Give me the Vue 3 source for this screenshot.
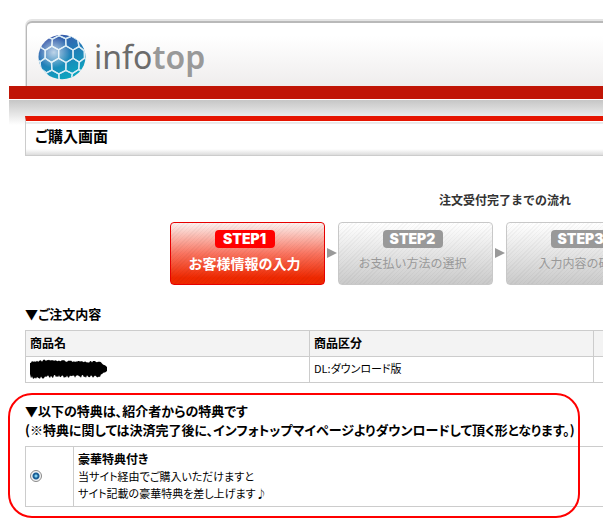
<template>
  <div class="page">
    <header class="header">
      <a class="logo" href="#" aria-label="infotop">
        <svg class="globe" viewBox="0 0 48 46" aria-hidden="true">
          <defs>
            <linearGradient id="sea" x1="0.15" y1="0" x2="0.6" y2="1">
              <stop offset="0" stop-color="#4350a6" />
              <stop offset="0.45" stop-color="#2577b6" />
              <stop offset="1" stop-color="#0aa8c0" />
            </linearGradient>
            <radialGradient id="shine" cx="0.33" cy="0.4" r="0.34">
              <stop offset="0" stop-color="#fff" stop-opacity="0.7" />
              <stop offset="1" stop-color="#fff" stop-opacity="0" />
            </radialGradient>
            <clipPath id="ball"><ellipse cx="24" cy="23" rx="23.5" ry="22.3" /></clipPath>
          </defs>
          <g clip-path="url(#ball)">
            <rect width="48" height="46" fill="url(#sea)" />
            <polygon
              v-for="(cell, i) in cells"
              :key="i"
              :points="cell"
              fill="none"
              stroke="#d9ecf5"
              stroke-width="1.3"
            />
            <rect width="48" height="46" fill="url(#shine)" />
          </g>
        </svg>
        <span class="name">info<b>top</b></span>
      </a>
    </header>
    <div class="bar"></div>

    <main class="main">
      <h1 class="title">ご購入画面</h1>

      <section class="flow">
        <h2 class="flow-title">注文受付完了までの流れ</h2>
        <ol class="steps">
          <li v-for="step in steps" :key="step.no" class="step" :class="{ active: step.active }">
            <span class="badge">{{ step.no }}</span>
            <span class="label">{{ step.label }}</span>
          </li>
        </ol>
      </section>

      <section class="order">
        <h2 class="heading">▼ご注文内容</h2>
        <table class="items">
          <colgroup>
            <col class="wide" />
            <col class="wide" />
            <col />
          </colgroup>
          <thead>
            <tr>
              <th>商品名</th>
              <th>商品区分</th>
              <th></th>
            </tr>
          </thead>
          <tbody>
            <tr>
              <td>
                <svg class="scribble" viewBox="0 0 78 22" aria-hidden="true">
                  <path :d="scribble" />
                </svg>
              </td>
              <td>DL:ダウンロード版</td>
              <td></td>
            </tr>
          </tbody>
        </table>
      </section>

      <section class="bonus">
        <h2 class="heading">
          ▼以下の特典は、紹介者からの特典です<br />
          <span class="note">(※特典に関しては決済完了後に、インフォトップマイページよりダウンロードして頂く形となります。)</span>
        </h2>
        <table class="items">
          <colgroup>
            <col class="narrow" />
            <col />
          </colgroup>
          <tbody>
            <tr>
              <td><input id="bonus1" v-model="picked" type="radio" name="bonus" value="1" /></td>
              <td>
                <label for="bonus1">
                  <strong>豪華特典付き</strong><br />
                  当サイト経由でご購入いただけますと<br />
                  サイト記載の豪華特典を差し上げます♪
                </label>
              </td>
            </tr>
          </tbody>
        </table>
        <div class="marker"></div>
      </section>
    </main>
  </div>
</template>

<script setup>
import { ref } from "vue";

const picked = ref("1");

const steps = [
  { no: "STEP1", label: "お客様情報の入力", active: true },
  { no: "STEP2", label: "お支払い方法の選択", active: false },
  { no: "STEP3", label: "入力内容の確認", active: false },
];

// 六角形のマス目を球面に投影する
const R = 28;
const project = (x, y) => {
  const d = Math.hypot(x, y) || 1;
  const r = R * Math.sin(Math.min(d / R, Math.PI / 2));
  return `${(24 + (x / d) * r).toFixed(1)},${(23 + (y / d) * r).toFixed(1)}`;
};
const cells = [];
for (let row = -3; row <= 3; row++) {
  for (let col = -3; col <= 3; col++) {
    const cx = 4 + col * 14.8 + (row % 2 ? 7.4 : 0);
    const cy = -3 + row * 12.8;
    const points = [];
    for (let k = 0; k < 6; k++) {
      const a = Math.PI / 6 + (k * Math.PI) / 3;
      points.push(project(cx + 8.54 * Math.cos(a), cy + 8.54 * Math.sin(a)));
    }
    cells.push(points.join(" "));
  }
}

// 商品名を隠す塗りつぶし（ふちはギザギザ）
const noise = (n) => Math.abs(Math.sin(n * 12.9898) * 43758.5453) % 1;
const top = [];
const bottom = [];
for (let x = 1; x <= 75; x++) {
  const end = x > 70 ? (x - 70) * 0.8 : 0;
  top.push(`${x} ${2 + noise(x) * 2 + (x < 14 ? 1 : 0) - Math.sin(x / 12) + end}`);
  bottom.unshift(`${x} ${17 + noise(x + 99) * 3 + (x < 14 ? 1 : 0) - end}`);
}
const scribble = `M0 5L${top.join("L")}L77 9L77 13L${bottom.join("L")}L0 16Z`;
</script>

<style>
body {
  margin: 0;
  background: #fff;
}
</style>

<style scoped>
.page {
  padding: 19px 0 14px 9px;
  overflow: hidden;
  color: #000;
  font-family: "Noto Sans CJK JP", sans-serif;
  font-size: 11px;
  font-feature-settings: "palt";
}

.header {
  height: 67px;
  margin-left: 16px;
  padding: 2px 0 0 1px;
  box-sizing: border-box;
  border-top-left-radius: 7px;
  background: #e4e4e4;
}

.logo {
  display: flex;
  align-items: center;
  gap: 8px;
  height: 65px;
  padding: 5px 0 0 11px;
  box-sizing: border-box;
  border: solid #b9b9b9;
  border-width: 2px 0 0 1px;
  border-top-left-radius: 6px;
  background: linear-gradient(#fff 20%, #efeded);
  color: #6b6b6b;
  text-decoration: none;
}

.globe {
  width: 48px;
  height: 46px;
}

.name {
  font-family: "Noto Sans", sans-serif;
  font-size: 32px;
  line-height: 44px;
}

.name b {
  color: #999;
  font-weight: 600;
}

.bar {
  height: 39px;
  margin-bottom: -9px;
  box-sizing: border-box;
  border-top: 13px solid #c01506;
  background: linear-gradient(#fff 1px, #c6c6c6 1px, #fff);
}

.main {
  margin-left: 16px;
}

.title {
  position: relative;
  height: 40px;
  margin: 0;
  padding-left: 9px;
  box-sizing: border-box;
  border-top: 5px solid #e51400;
  border-bottom: 1px solid #ccc;
  border-left: 1px solid #ccc;
  background: linear-gradient(#fff 1px, #e6e6e6 1px, #eee 3px, #fff 3px, #fff 28px, #dcdcdc);
  font-size: 15px;
  line-height: 30px;
}

.flow {
  width: 670px;
  margin: 34px 0 0 145px;
}

.flow-title {
  margin: 0;
  color: #333;
  font-size: 12px;
  line-height: 20px;
  text-align: center;
  font-feature-settings: normal;
}

.steps {
  display: flex;
  gap: 13px;
  margin: 12px 0 0;
  padding: 0;
  list-style: none;
}

.step {
  position: relative;
  display: flex;
  flex: 0 0 155px;
  flex-direction: column;
  align-items: center;
  height: 63px;
  padding: 7px 6px 0 0;
  box-sizing: border-box;
  border: 1px solid #c8c8c8;
  border-radius: 4px;
  background: repeating-linear-gradient(135deg, rgba(0, 0, 0, 0.03) 0 1px, transparent 1px 3px),
    linear-gradient(#fff, #cacaca);
  color: #999;
  font-size: 12px;
  font-feature-settings: normal;
}

.step + .step::before {
  content: "";
  position: absolute;
  top: 25px;
  left: -12px;
  border: solid transparent;
  border-width: 5px 0 5px 10px;
  border-left-color: #999;
}

.step.active {
  border-color: #e60000;
  background: repeating-linear-gradient(135deg, rgba(0, 0, 0, 0.03) 0 1px, transparent 1px 3px),
    linear-gradient(#fbf1ef, #f97460 50%, #ee2800 90%);
  color: #fff;
  font-size: 14px;
  font-weight: bold;
}

.badge {
  width: 60px;
  border-radius: 4px;
  background: #999;
  color: #fff;
  font-family: Inter, sans-serif;
  font-size: 14px;
  font-weight: 900;
  line-height: 18px;
  text-align: center;
}

.active .badge {
  background: #f00;
}

.label {
  margin-top: 4px;
  line-height: 22px;
  white-space: nowrap;
}

.order {
  margin-top: 19px;
}

.heading {
  margin: 0;
  font-size: 13px;
  line-height: 19px;
}

.note {
  white-space: nowrap;
}

.items {
  width: 100%;
  margin-top: 7px;
  border-collapse: collapse;
  table-layout: fixed;
}

.wide {
  width: 284px;
}

.narrow {
  width: 48px;
}

.items th,
.items td {
  height: 26px;
  padding: 0 4px 2px;
  box-sizing: border-box;
  border: 1px solid #ccc;
  line-height: 17px;
  text-align: left;
}

.items th:last-child,
.items td:last-child {
  border-right: 0;
}

.items th,
.items strong {
  font-size: 12px;
}

.items th {
  background: #f3f3f3;
}

.scribble {
  display: block;
  width: 78px;
  height: 22px;
}

.bonus {
  position: relative;
  margin-top: 18px;
}

.bonus .items td {
  height: 60px;
}

.bonus input {
  display: block;
  width: 12px;
  height: 12px;
  margin: 0;
  border: 1px solid #8a8a8a;
  border-radius: 50%;
  appearance: none;
  background: #f4f4f4;
}

.bonus input:checked {
  background: radial-gradient(circle, #7fd0f0 0 1px, #1c5f96 2px 3px, #f4f4f4 4px);
}

/* 赤い囲み */
.marker {
  position: absolute;
  top: -8px;
  right: 23px;
  bottom: -11px;
  left: -17px;
  border: 2px solid #f00;
  border-radius: 24px;
  pointer-events: none;
}
</style>
